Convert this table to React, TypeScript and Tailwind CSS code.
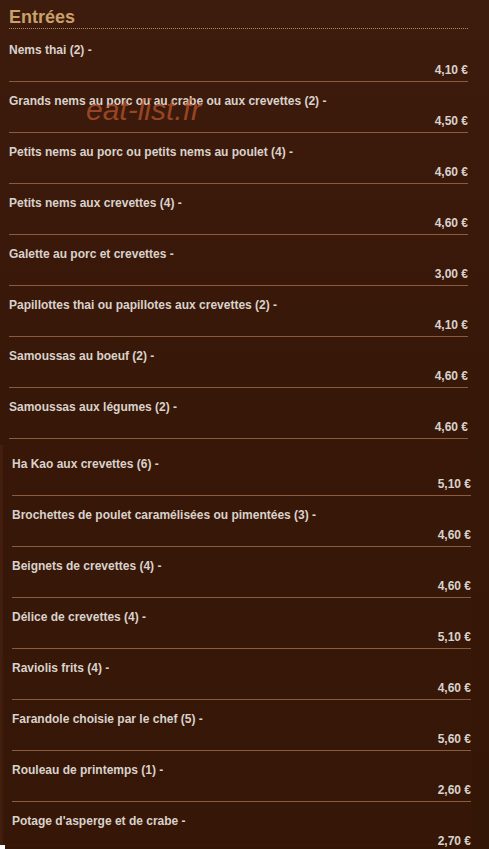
const top = [
  ["Nems thai (2) -", "4,10 €"],
  ["Grands nems au porc ou au crabe ou aux crevettes (2) -", "4,50 €"],
  ["Petits nems au porc ou petits nems au poulet (4) -", "4,60 €"],
  ["Petits nems aux crevettes (4) -", "4,60 €"],
  ["Galette au porc et crevettes -", "3,00 €"],
  ["Papillottes thai ou papillotes aux crevettes (2) -", "4,10 €"],
  ["Samoussas au boeuf (2) -", "4,60 €"],
  ["Samoussas aux légumes (2) -", "4,60 €"],
];

const bottom = [
  ["Ha Kao aux crevettes (6) -", "5,10 €"],
  ["Brochettes de poulet caramélisées ou pimentées (3) -", "4,60 €"],
  ["Beignets de crevettes (4) -", "4,60 €"],
  ["Délice de crevettes (4) -", "5,10 €"],
  ["Raviolis frits (4) -", "4,60 €"],
  ["Farandole choisie par le chef (5) -", "5,60 €"],
  ["Rouleau de printemps (1) -", "2,60 €"],
  ["Potage d'asperge et de crabe -", "2,70 €"],
];

function Row({name, price}: {name: string; price: string}) {
  return (
    <div className="border-b border-[#8a5c3d] pt-[12px] pb-[4px]">
      <div className="h-[14px] leading-[14px]">{name}</div>
      <div className="mt-[6px] h-[14px] text-right leading-[14px]">{price}</div>
    </div>
  );
}

export default function App() {
  return (
    <div
      className="relative h-[849px] w-[489px] overflow-hidden bg-gradient-to-b from-[#3d1b0d] via-[#371708] to-[#341606] text-[12px] font-bold text-[#d9d2cb]"
      style={{fontFamily: '"Liberation Sans", Arial, sans-serif'}}
    >
      <section className="w-[468px] pl-[9px]">
        <div className="border-b border-dotted border-[#b08a62] pt-[8px] pb-[1px] text-[18px] leading-[19px] text-[#c9a169]">
          Entrées
        </div>
        <div className="mt-[2px]">
          {top.map(([n, p]) => (
            <Row key={n} name={n} price={p} />
          ))}
        </div>
      </section>

      {/* second block, slightly shifted */}
      <section className="mt-[10px] h-[401px] w-[471px] bg-[#3a1909]/40 pl-[12px] shadow-[inset_3px_0_2px_rgba(90,45,25,0.35)]">
        <div className="-mt-[4px]">
          {bottom.map(([n, p]) => (
            <Row key={n} name={n} price={p} />
          ))}
        </div>
      </section>

      {/* watermark */}
      <div className="pointer-events-none absolute left-[86px] top-[92px] text-[30px] font-normal italic leading-[36px] text-[#c2592c]/70">
        eat-list.fr
      </div>
      <div className="absolute bottom-0 left-0 h-[4px] w-[5px] bg-white" />
    </div>
  );
}
